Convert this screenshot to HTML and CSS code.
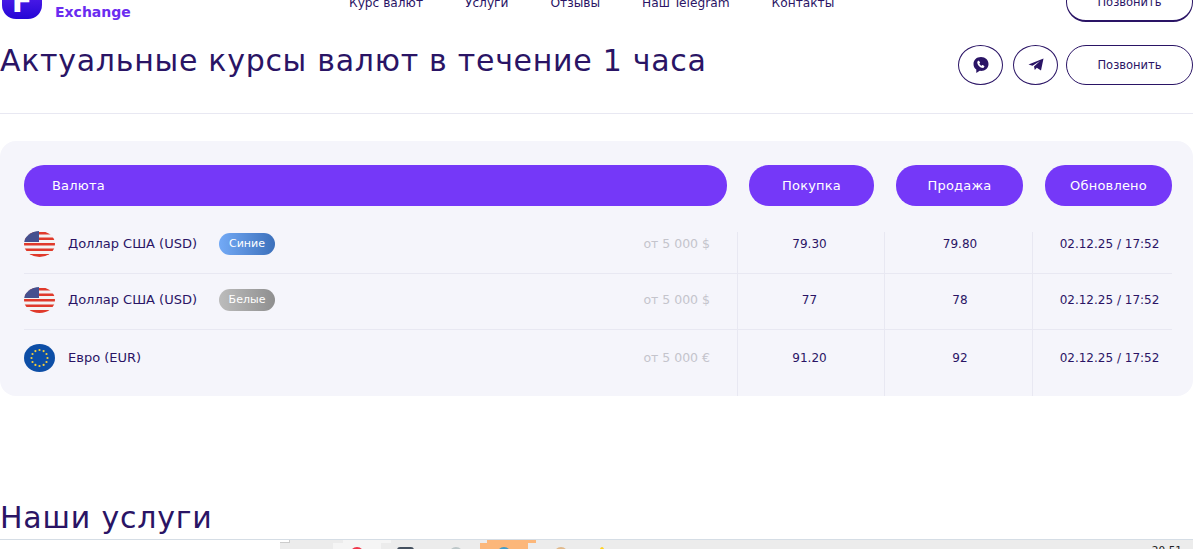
FILE: index.html
```html
<!DOCTYPE html>
<html lang="ru">
<head>
    <meta charset="UTF-8">
    <meta name="viewport" content="width=device-width, initial-scale=1.0">
    <title>Курсы валют</title>
    <link rel="stylesheet" href="styles.css">
</head>
<body>

    <svg class="defs" width="0" height="0">
        <symbol id="flag-us" viewBox="0 0 31 26">
            <ellipse cx="15.5" cy="13" rx="15.5" ry="13" fill="#f3f3f3"/>
            <clipPath id="us-clip"><ellipse cx="15.5" cy="13" rx="15.5" ry="13"/></clipPath>
            <g clip-path="url(#us-clip)" fill="#e0392b">
                <rect x="0" y="1" width="31" height="2.5"/>
                <rect x="0" y="6.5" width="31" height="2.5"/>
                <rect x="0" y="12" width="31" height="2.5"/>
                <rect x="0" y="17.5" width="31" height="2.5"/>
                <rect x="0" y="23" width="31" height="3"/>
                <rect x="0" y="0" width="15" height="11" fill="#45508f"/>
            </g>
        </symbol>
        <symbol id="flag-eu" viewBox="0 0 31 28">
            <ellipse cx="15.5" cy="14" rx="15.5" ry="14" fill="#0d4ea6"/>
            <g fill="#f5cf3a">
                <circle cx="15.5" cy="6" r="1.1"/>
                <circle cx="19.6" cy="7.1" r="1.1"/>
                <circle cx="22.5" cy="10" r="1.1"/>
                <circle cx="23.5" cy="14" r="1.1"/>
                <circle cx="22.5" cy="18" r="1.1"/>
                <circle cx="19.6" cy="20.9" r="1.1"/>
                <circle cx="15.5" cy="22" r="1.1"/>
                <circle cx="11.4" cy="20.9" r="1.1"/>
                <circle cx="8.5" cy="18" r="1.1"/>
                <circle cx="7.5" cy="14" r="1.1"/>
                <circle cx="8.5" cy="10" r="1.1"/>
                <circle cx="11.4" cy="7.1" r="1.1"/>
            </g>
        </symbol>
    </svg>

    <!-- Шапка, страница прокручена вниз -->
    <header class="site-header">
        <div class="logo">
            <div class="logo-mark">F</div>
            <div class="logo-word">Exchange</div>
        </div>
        <nav class="nav">
            <a href="#">Курс валют</a>
            <a href="#">Услуги</a>
            <a href="#">Отзывы</a>
            <a href="#">Наш Telegram</a>
            <a href="#">Контакты</a>
        </nav>
        <a href="#" class="call-btn call-btn-top">Позвонить</a>
    </header>

    <section class="title-row">
        <h1>Актуальные курсы валют в течение 1 часа</h1>
        <div class="actions">
            <a href="#" class="round-btn">
                <svg width="18" height="18" viewBox="0 0 18 18">
                    <path fill="#2a1465" d="M9 1C4.6 1 1.5 3.8 1.5 8c0 2.4 1 4.300 2.800 5.500V17l3.400-2.200c.4.100.9.100 1.300.100 4.400 0 7.500-2.900 7.500-6.900S13.400 1 9 1z"/>
                    <path fill="#fff" d="M6.300 4.800 5.300 5.700c-.4 2.900 2.900 6.400 6 6.200l1-1.100c.2-.3.200-.6-.1-.8l-1.400-.9c-.3-.2-.5-.1-.7.100l-.5.600c-1-.4-1.900-1.300-2.300-2.300l.6-.5c.2-.2.300-.5.100-.7l-.9-1.400c-.2-.2-.5-.2-.8-.1z"/>
                </svg>
            </a>
            <a href="#" class="round-btn">
                <svg width="16" height="14" viewBox="0 0 16 14">
                    <path fill="#2a1465" d="M.5 6.500 15.500.5 13 12.500 8.800 9.700 6.800 12 6 8.500 12 3 4.500 7.800z"/>
                </svg>
            </a>
            <a href="#" class="call-btn">Позвонить</a>
        </div>
    </section>

    <!-- Таблица курсов -->
    <section class="rates">
        <div class="rates-head">
            <div class="pill pill-left">Валюта</div>
            <div class="pill">Покупка</div>
            <div class="pill">Продажа</div>
            <div class="pill">Обновлено</div>
        </div>

        <div class="rate-row rate-row-first">
            <div class="cell cell-name">
                <svg class="flag" width="31" height="26"><use href="#flag-us"/></svg>
                <span class="cur-name">Доллар США (USD)</span>
                <span class="badge badge-blue">Синие</span>
                <span class="min-sum">от 5 000 $</span>
            </div>
            <div class="cell cell-buy">79.30</div>
            <div class="cell cell-sell">79.80</div>
            <div class="cell cell-date">02.12.25 / 17:52</div>
        </div>

        <div class="rate-row">
            <div class="cell cell-name">
                <svg class="flag" width="31" height="26"><use href="#flag-us"/></svg>
                <span class="cur-name">Доллар США (USD)</span>
                <span class="badge badge-gray">Белые</span>
                <span class="min-sum">от 5 000 $</span>
            </div>
            <div class="cell cell-buy">77</div>
            <div class="cell cell-sell">78</div>
            <div class="cell cell-date">02.12.25 / 17:52</div>
        </div>

        <div class="rate-row rate-row-last">
            <div class="cell cell-name">
                <svg class="flag" width="31" height="28"><use href="#flag-eu"/></svg>
                <span class="cur-name">Евро (EUR)</span>
                <span class="min-sum">от 5 000 €</span>
            </div>
            <div class="cell cell-buy">91.20</div>
            <div class="cell cell-sell">92</div>
            <div class="cell cell-date">02.12.25 / 17:52</div>
        </div>
    </section>

    <h2 class="section-title">Наши услуги</h2>

    <!-- Панель задач -->
    <footer class="taskbar">
        <div class="task-start"></div>
        <div class="task task-light"><span class="task-dot task-red"></span></div>
        <div class="task task-dark-wrap"><span class="task-dot task-dark"></span></div>
        <div class="task task-grey-wrap"><span class="task-dot task-grey"></span></div>
        <div class="task task-orange"><span class="task-dot task-blue"></span></div>
        <div class="task task-tan-wrap"><span class="task-dot task-tan"></span></div>
        <div class="task task-yellow-wrap"><span class="task-dot task-yellow"></span></div>
        <div class="clock">20:51</div>
    </footer>

</body>
</html>
```

FILE: styles.css
```css
html, body {
    height: 549px;
}

body {
    font-family: "DejaVu Sans", sans-serif;
    font-size: 12px;
    color: #2a1465;
    background-color: #fff;
    margin: 0;
    padding: 0;
    display: flex;
    flex-direction: column;
    overflow: hidden;
}

a {
    color: inherit;
    text-decoration: none;
}

.defs {
    position: absolute;
}

.site-header {
    height: 22px;
    flex-shrink: 0;
    display: flex;
    align-items: flex-end;
    overflow: hidden;
}

.logo {
    display: flex;
    align-items: flex-end;
    padding: 0 0 3px 2px;
    width: 347px;
    box-sizing: border-box;
}

.logo-mark {
    width: 40px;
    height: 40px;
    flex-shrink: 0;
    border-radius: 14px;
    background: linear-gradient(180deg, #6a2cf5, #2506d6);
    color: #fff;
    font-size: 30px;
    font-weight: bold;
    line-height: 46px;
    text-align: center;
}

.logo-word {
    margin-left: 13px;
    color: #6a2cf0;
    font-size: 14px;
    font-weight: bold;
    line-height: 14px;
}

.nav {
    display: flex;
    gap: 42px;
    padding: 0 0 12px 2px;
    font-size: 12.2px;
    line-height: 14px;
    white-space: nowrap;
}

.call-btn {
    width: 127px;
    height: 40px;
    box-sizing: border-box;
    flex-shrink: 0;
    display: flex;
    align-items: center;
    justify-content: center;
    border: 1px solid #2a1465;
    border-radius: 20px;
    font-size: 11.5px;
}

.call-btn-top {
    margin-left: auto;
    border-bottom-width: 2px;
    padding-top: 1px;
}

.title-row {
    height: 92px;
    flex-shrink: 0;
    box-sizing: border-box;
    display: flex;
    justify-content: space-between;
    border-bottom: 1px solid #e8e8f2;
    padding-top: 23px;
}

h1 {
    margin: 0;
    font-size: 30px;
    font-weight: normal;
    line-height: 32px;
    letter-spacing: 0.72px;
    white-space: nowrap;
}

.actions {
    display: flex;
    align-items: flex-start;
}

.round-btn {
    width: 45px;
    height: 40px;
    box-sizing: border-box;
    display: flex;
    align-items: center;
    justify-content: center;
    border: 1px solid #2a1465;
    border-radius: 50%;
    margin-right: 10px;
}

.round-btn + .call-btn {
    margin-left: -2px;
}

.rates {
    height: 255px;
    flex-shrink: 0;
    box-sizing: border-box;
    margin-top: 27px;
    padding: 24px 21px 0 24px;
    background-color: #f5f5fb;
    border-radius: 16px;
}

.rates-head {
    display: grid;
    grid-template-columns: 703px 125px 127px 127px;
    column-gap: 22px;
    margin-bottom: 26px;
}

.pill {
    height: 41px;
    display: flex;
    align-items: center;
    justify-content: center;
    background-color: #7538f8;
    color: #fff;
    border-radius: 20px;
    font-size: 13px;
    letter-spacing: 0.2px;
}

.pill-left {
    justify-content: flex-start;
    padding-left: 28px;
}

.rate-row {
    display: grid;
    grid-template-columns: 713px 147px 148px 140px;
    border-bottom: 1px solid #e8e8f2;
}

.rate-row-last {
    border-bottom: none;
}

.cell {
    display: flex;
    align-items: center;
    justify-content: center;
    height: 26px;
    padding: 13px 0 16px;
    border-left: 1px solid #e8e8f2;
    line-height: 14px;
}

.rate-row-first .cell {
    height: 24px;
    padding-top: 0;
    padding-bottom: 17px;
}

.rate-row-last .cell {
    padding-top: 15px;
    padding-bottom: 25px;
}

.cell-name {
    justify-content: flex-start;
    border-left: none;
}

.cell-buy {
    padding-right: 3px;
}

.cell-sell {
    padding-left: 3px;
}

.cell-date {
    padding-left: 14px;
}

.flag {
    flex-shrink: 0;
}

.cur-name {
    margin-left: 13px;
    font-size: 13px;
}

.badge {
    margin-left: 22px;
    width: 56px;
    height: 22px;
    display: flex;
    align-items: center;
    justify-content: center;
    border-radius: 11px;
    color: #fff;
    font-size: 11px;
}

.badge-blue {
    background: linear-gradient(90deg, #73aaf6, #3c70bb);
}

.badge-gray {
    background: linear-gradient(90deg, #bcbcbc, #8f8f8f);
}

.min-sum {
    margin-left: auto;
    padding-right: 27px;
    font-size: 12.5px;
    color: #c4c4cc;
}

.section-title {
    margin: 0;
    padding-top: 104px;
    font-size: 30px;
    font-weight: normal;
    line-height: 36px;
    letter-spacing: 0.8px;
    height: 36px;
    flex-shrink: 0;
}

.taskbar {
    position: fixed;
    left: 0;
    right: 0;
    bottom: 0;
    height: 10px;
    box-sizing: border-box;
    display: flex;
    background: linear-gradient(#ececec, #ececec) 280px 0 no-repeat;
    border-top: 1px solid #d5dde5;
    padding-left: 280px;
    overflow: hidden;
}

.task-start {
    width: 10px;
    height: 3px;
    flex-shrink: 0;
    margin-right: 43px;
    background-color: #fff;
    border-right: 1px solid #ccc;
    border-bottom: 1px solid #ccc;
    box-sizing: border-box;
}

.task {
    display: flex;
    justify-content: center;
    padding-top: 7px;
    flex-shrink: 0;
}

.task-light {
    width: 48px;
    padding-right: 10px;
    background:
        linear-gradient(#f5f5f5, #f5f5f5) right top / 48px 3px no-repeat,
        linear-gradient(#f5f5f5, #f5f5f5) left bottom / 48px 6px no-repeat;
}

.task-dark-wrap {
    width: 28px;
}

.task-grey-wrap {
    width: 49px;
    padding-left: 12px;
}

.task-orange {
    width: 48px;
    padding-right: 8px;
    background:
        linear-gradient(#fcb77a, #fcb77a) right top / 49px 3px no-repeat,
        linear-gradient(#fcb77a, #fcb77a) left bottom / 48px 6px no-repeat;
}

.task-tan-wrap {
    width: 50px;
}

.task-yellow-wrap {
    width: 32px;
}

.task-dot {
    width: 14px;
    height: 14px;
    border-radius: 50%;
}

.task-red { background-color: #f0364a; }
.task-dark { background-color: #44505f; width: 17px; border-radius: 3px; }
.task-grey { background-color: #bcc6c8; }
.task-blue { background-color: #3f9bc8; }
.task-tan { background-color: #e0b88a; }
.task-yellow { background-color: #ffd21f; width: 6px; }

.clock {
    margin-left: auto;
    padding: 4px 11px 0 0;
    font-size: 10.5px;
    line-height: 12px;
    color: #222;
}
```
